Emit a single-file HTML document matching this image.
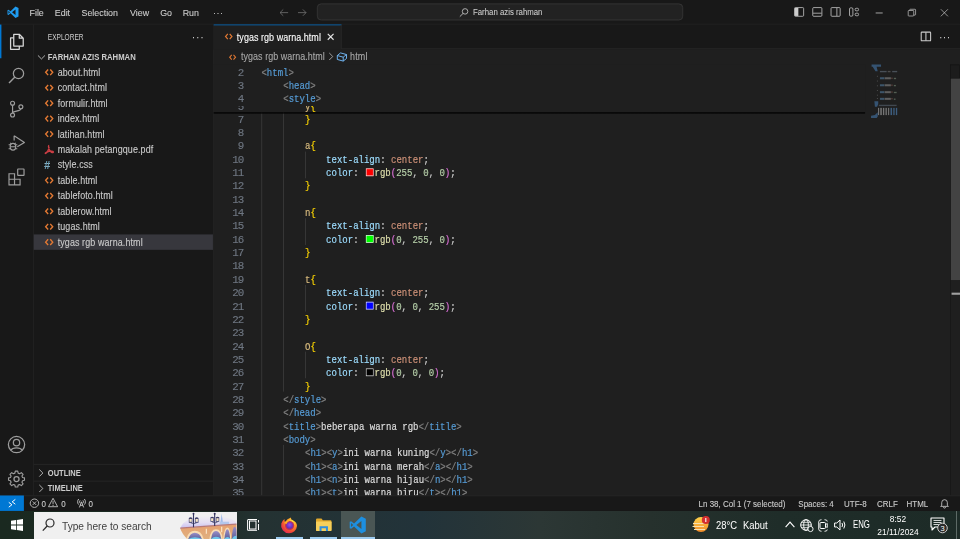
<!DOCTYPE html>
<html><head><meta charset="utf-8">
<style>
html,body{margin:0;padding:0;width:960px;height:539px;overflow:hidden;background:#181818;}
#s{position:absolute;left:0;top:0;width:1366px;height:768px;transform-origin:0 0;transform:scale(0.70278,0.70182);overflow:hidden;background:#181818;font-family:"Liberation Sans",sans-serif;color:#cccccc;}
.a{position:absolute;}
svg{position:absolute;overflow:visible;}
/* title */
#title{left:0;top:0;width:1366px;height:34px;background:#181818;border-bottom:1px solid #2b2b2b;}
.menu{position:absolute;top:0;height:35px;line-height:37px;font-size:13.8px;color:#cccccc;white-space:nowrap;transform:scaleX(0.913);transform-origin:0 0;-webkit-text-stroke:0.15px #cccccc;}
#cc{left:451px;top:5px;width:519px;height:22px;border:1px solid #3c3c3c;border-radius:6px;background:#222222;box-sizing:content-box;}
#cctext{position:absolute;left:221px;top:0;line-height:24px;font-size:13px;color:#cccccc;white-space:nowrap;transform:scaleX(0.855);transform-origin:0 0;-webkit-text-stroke:0.1px #cccccc;}
/* activity */
#act{left:0;top:35px;width:47px;height:671px;background:#181818;border-right:1px solid #2b2b2b;}
/* sidebar */
#side{left:48px;top:35px;width:255px;height:671px;background:#181818;border-right:1px solid #2b2b2b;}
.sh{position:absolute;font-size:11px;white-space:nowrap;}
.row{position:absolute;left:0;width:255px;height:22px;line-height:23px;font-size:14.3px;letter-spacing:0.17px;color:#cccccc;white-space:nowrap;-webkit-text-stroke:0.15px #cccccc;}
.row span{position:absolute;left:34px;transform:scaleX(0.89);transform-origin:0 0;}
.row i{position:absolute;left:14px;top:0;font-style:normal;}
/* editor */
#tabs{left:304px;top:35px;width:1062px;height:34px;background:#181818;border-bottom:1px solid #2b2b2b;}
#tab{left:304px;top:35px;width:182px;height:35px;background:#1f1f1f;border-top:1px solid #0078d4;box-sizing:border-box;border-right:1px solid #2b2b2b;}
#ed{left:304px;top:70px;width:1062px;height:636px;background:#1f1f1f;}
.ln{position:absolute;left:304px;width:42px;height:19px;line-height:24px;text-align:right;font-family:"Liberation Mono",monospace;font-size:15.4px;letter-spacing:-1.54px;color:#6e7681;-webkit-text-stroke:0.2px #6e7681;}
.cl{position:absolute;left:373px;height:19px;line-height:24px;font-family:"Liberation Mono",monospace;font-size:15.4px;white-space:pre;color:#cccccc;-webkit-text-stroke:0.28px currentColor;transform:scaleX(0.8333);transform-origin:0 0;}
.t{color:#808080}.n{color:#569cd6}.p{color:#9cdcfe}.v{color:#ce9178}.num{color:#b5cea8}.sel{color:#d7ba7d}.br{color:#ffd700}.br2{color:#da70d6}.fn{color:#dcdcaa}.tx{color:#dedede}
.ig{position:absolute;width:1px;background:#404040;}
.sw{display:inline-block;width:11px;height:9px;border:1px solid #eeeeee;vertical-align:0px;margin:0 2px 0 3px;}
/* status */
#status{left:0;top:706px;width:1366px;height:21px;border-top:1px solid #2b2b2b;background:#181818;}
.st{position:absolute;top:706px;height:22px;line-height:23px;font-size:13.2px;color:#cccccc;white-space:nowrap;transform:scaleX(0.86);transform-origin:0 0;-webkit-text-stroke:0.15px #cccccc;}
/* taskbar */
#task{left:0;top:728px;width:1366px;height:40px;background:#1b2a22;}
</style></head><body>
<div id="s">
<!-- TITLE BAR -->
<div id="title" class="a"></div>
<svg style="left:10px;top:9px" width="17" height="17" viewBox="0 0 100 100"><path d="M71 2 L96 14 V86 L71 98 L29 58 L12 72 L4 68 V32 L12 28 L29 42 Z M71 27 L42 50 L71 73 Z M12 38 V62 L24 50 Z" fill="#1f9cf0"/></svg>
<div class="menu" style="left:42px">File</div>
<div class="menu" style="left:78px">Edit</div>
<div class="menu" style="left:116px">Selection</div>
<div class="menu" style="left:185px">View</div>
<div class="menu" style="left:228px">Go</div>
<div class="menu" style="left:260px">Run</div>
<div class="menu" style="left:303px;letter-spacing:1px">···</div>
<svg style="left:396px;top:10px" width="16" height="16" viewBox="0 0 16 16"><path d="M14 8H2.5M7 3.5L2.5 8L7 12.5" stroke="#6e6e6e" stroke-width="1.2" fill="none"/></svg>
<svg style="left:422px;top:10px" width="16" height="16" viewBox="0 0 16 16"><path d="M2 8H13.5M9 3.5L13.5 8L9 12.5" stroke="#6e6e6e" stroke-width="1.2" fill="none"/></svg>
<div id="cc" class="a">
 <svg style="left:201px;top:4.5px" width="14" height="14" viewBox="0 0 16 16"><circle cx="10" cy="6" r="4.5" stroke="#cccccc" stroke-width="1.3" fill="none"/><path d="M6.8 9.2L1.5 14.5" stroke="#cccccc" stroke-width="1.4"/></svg>
 <div id="cctext">Farhan azis rahman</div>
</div>
<!-- layout icons -->
<svg style="left:1129px;top:9px" width="16" height="16" viewBox="0 0 16 16"><rect x="1.5" y="1.8" width="13" height="12.4" rx="1.3" stroke="#cccccc" fill="none" stroke-width="1.1"/><rect x="2" y="2.3" width="4.5" height="11.4" fill="#cccccc"/><path d="M6.5 2.3V13.7" stroke="#cccccc"/></svg>
<svg style="left:1155px;top:9px" width="16" height="16" viewBox="0 0 16 16"><rect x="1.5" y="1.8" width="13" height="12.4" rx="1.3" stroke="#cccccc" fill="none" stroke-width="1.1"/><path d="M2 9.8H14" stroke="#cccccc" stroke-width="1.1"/></svg>
<svg style="left:1181px;top:9px" width="16" height="16" viewBox="0 0 16 16"><rect x="1.5" y="1.8" width="13" height="12.4" rx="1.3" stroke="#cccccc" fill="none" stroke-width="1.1"/><path d="M9.8 2.3V13.7" stroke="#cccccc" stroke-width="1.1"/></svg>
<svg style="left:1207px;top:9px" width="16" height="16" viewBox="0 0 16 16"><rect x="1.8" y="2.2" width="4.8" height="11.8" rx="1.6" stroke="#cccccc" fill="none" stroke-width="1.1"/><rect x="9.8" y="2.8" width="4.8" height="3.6" rx="1.5" stroke="#cccccc" fill="none" stroke-width="1.1"/><rect x="9.8" y="9.8" width="4.8" height="3.6" rx="1.5" stroke="#cccccc" fill="none" stroke-width="1.1"/></svg>
<svg style="left:1244px;top:10px" width="16" height="16" viewBox="0 0 16 16"><path d="M2 8.5H12" stroke="#cccccc" stroke-width="1.1"/></svg>
<svg style="left:1291px;top:11px" width="14" height="14" viewBox="0 0 16 16"><rect x="1.5" y="4.5" width="9" height="9" rx="1" stroke="#cccccc" fill="none" stroke-width="1.1"/><path d="M4 4.5V3.5A1 1 0 0 1 5 2.5H12.5A1 1 0 0 1 13.5 3.5V11A1 1 0 0 1 12.5 12H10.5" stroke="#cccccc" fill="none" stroke-width="1.1"/></svg>
<svg style="left:1337px;top:11px" width="14" height="14" viewBox="0 0 16 16"><path d="M2 2.5L13.5 14M13.5 2.5L2 14" stroke="#cccccc" stroke-width="1.1"/></svg>

<!-- ACTIVITY BAR -->
<div id="act" class="a"></div>
<div class="a" style="left:0;top:35px;width:2px;height:48px;background:#0078d4"></div>
<div id="acticons">
<svg style="left:9.5px;top:45.5px" width="27" height="27" viewBox="0 0 24 24"><path d="M8.5 2.5H15.5L20.5 7.5V17.5H8.5Z M15.5 2.5V7.5H20.5" stroke="#d7d7d7" stroke-width="1.6" fill="none" stroke-linejoin="round"/><path d="M8.5 7H4.5V21.5H15.5V17.5" stroke="#d7d7d7" stroke-width="1.6" fill="none" stroke-linejoin="round"/></svg>
<svg style="left:9.5px;top:93.5px" width="27" height="27" viewBox="0 0 24 24"><circle cx="14.5" cy="9.5" r="6.5" stroke="#9d9d9d" stroke-width="1.6" fill="none"/><path d="M10 14L2.5 21.5" stroke="#9d9d9d" stroke-width="1.8"/></svg>
<svg style="left:9.5px;top:141.5px" width="27" height="27" viewBox="0 0 24 24"><circle cx="7" cy="4.5" r="2.5" stroke="#9d9d9d" stroke-width="1.5" fill="none"/><circle cx="7" cy="19.5" r="2.5" stroke="#9d9d9d" stroke-width="1.5" fill="none"/><circle cx="17.5" cy="9" r="2.5" stroke="#9d9d9d" stroke-width="1.5" fill="none"/><path d="M7 7V17M17.5 11.5C17.5 15 7 14 7 17" stroke="#9d9d9d" stroke-width="1.5" fill="none"/></svg>
<svg style="left:9.5px;top:189.5px" width="27" height="27" viewBox="0 0 24 24"><path d="M9 3V9M9 3L22 11.5L13 17" stroke="#9d9d9d" stroke-width="1.5" fill="none" stroke-linejoin="round"/><ellipse cx="7.5" cy="17" rx="3.5" ry="4.2" stroke="#9d9d9d" stroke-width="1.5" fill="none"/><path d="M2 14.5H4M11 14.5H13M2 19.5H4M11 19.5H13M4 12L5.5 13.5M11 12L9.5 13.5M4 17H11" stroke="#9d9d9d" stroke-width="1.3"/></svg>
<svg style="left:9.5px;top:237.5px" width="27" height="27" viewBox="0 0 24 24"><path d="M2.5 8.5H9.5V15.5H16.5V22.5H2.5Z M2.5 15.5H9.5V22.5" stroke="#9d9d9d" stroke-width="1.5" fill="none"/><rect x="13.5" y="2.5" width="8" height="8" rx="0.5" stroke="#9d9d9d" stroke-width="1.5" fill="none"/></svg>
<svg style="left:9.5px;top:619.5px" width="27" height="27" viewBox="0 0 24 24"><circle cx="12" cy="12" r="10.3" stroke="#9d9d9d" stroke-width="1.6" fill="none"/><circle cx="12" cy="9.5" r="4" stroke="#9d9d9d" stroke-width="1.6" fill="none"/><path d="M5 19C7 15 17 15 19 19" stroke="#9d9d9d" stroke-width="1.6" fill="none"/></svg>
<svg style="left:9.5px;top:667.5px" width="27" height="27" viewBox="0 0 24 24"><path d="M10.3 1.8H13.7L14.3 4.6L16.4 5.5L18.8 3.9L21.2 6.3L19.6 8.7L20.5 10.8L23.2 11.3V14.7L20.5 15.3L19.6 17.4L21.2 19.8L18.8 22.2L16.4 20.6L14.3 21.5L13.7 24.2H10.3L9.7 21.5L7.6 20.6L5.2 22.2L2.8 19.8L4.4 17.4L3.5 15.3L0.8 14.7V11.3L3.5 10.8L4.4 8.7L2.8 6.3L5.2 3.9L7.6 5.5L9.7 4.6Z" transform="translate(12 13) scale(0.9) translate(-12 -13)" stroke="#9d9d9d" stroke-width="1.6" fill="none" stroke-linejoin="round"/><circle cx="12" cy="13" r="3.2" stroke="#9d9d9d" stroke-width="1.6" fill="none"/></svg>
</div>

<!-- SIDEBAR -->
<div id="side" class="a">
 <div class="sh" style="left:20px;top:0;line-height:36px;font-size:12px;color:#cccccc;transform:scaleX(0.78);transform-origin:0 0">EXPLORER</div>
 <div class="sh" style="left:225px;top:0;line-height:35px;font-size:15px;letter-spacing:1px">···</div>
 <div class="sh" style="left:20px;top:35px;line-height:22px;font-size:11.8px;font-weight:bold;color:#cccccc;transform:scaleX(0.93);transform-origin:0 0">FARHAN AZIS RAHMAN</div>
 <svg style="left:3px;top:38px" width="16" height="16" viewBox="0 0 16 16"><path d="M3 6L8 11L13 6" stroke="#cccccc" stroke-width="1.2" fill="none"/></svg>
 <div id="files"><div class="row" style="top:57px;"><svg style="left:16px;top:5px" width="12" height="12" viewBox="0 0 12 12"><path d="M4.5 2L1 6L4.5 10M7.5 2L11 6L7.5 10" stroke="#e37933" stroke-width="2" fill="none"/></svg><span>about.html</span></div>
<div class="row" style="top:79px;"><svg style="left:16px;top:5px" width="12" height="12" viewBox="0 0 12 12"><path d="M4.5 2L1 6L4.5 10M7.5 2L11 6L7.5 10" stroke="#e37933" stroke-width="2" fill="none"/></svg><span>contact.html</span></div>
<div class="row" style="top:101px;"><svg style="left:16px;top:5px" width="12" height="12" viewBox="0 0 12 12"><path d="M4.5 2L1 6L4.5 10M7.5 2L11 6L7.5 10" stroke="#e37933" stroke-width="2" fill="none"/></svg><span>formulir.html</span></div>
<div class="row" style="top:123px;"><svg style="left:16px;top:5px" width="12" height="12" viewBox="0 0 12 12"><path d="M4.5 2L1 6L4.5 10M7.5 2L11 6L7.5 10" stroke="#e37933" stroke-width="2" fill="none"/></svg><span>index.html</span></div>
<div class="row" style="top:145px;"><svg style="left:16px;top:5px" width="12" height="12" viewBox="0 0 12 12"><path d="M4.5 2L1 6L4.5 10M7.5 2L11 6L7.5 10" stroke="#e37933" stroke-width="2" fill="none"/></svg><span>latihan.html</span></div>
<div class="row" style="top:167px;"><svg style="left:15px;top:4px" width="14" height="14" viewBox="0 0 14 14"><path d="M7 1C5 1 6 6 9 10C10.5 12 13 12 13 10.5C13 9 9 9 3 11C0.5 12 1 13.5 2.5 12.5C4.5 11 6.5 6 7 3" stroke="#cc3e44" stroke-width="1.8" fill="none"/></svg><span>makalah petangque.pdf</span></div>
<div class="row" style="top:189px;"><div class="a" style="left:15px;top:0;line-height:23px;font-size:15px;font-weight:bold;color:#519aba;transform:none">#</div><span>style.css</span></div>
<div class="row" style="top:211px;"><svg style="left:16px;top:5px" width="12" height="12" viewBox="0 0 12 12"><path d="M4.5 2L1 6L4.5 10M7.5 2L11 6L7.5 10" stroke="#e37933" stroke-width="2" fill="none"/></svg><span>table.html</span></div>
<div class="row" style="top:233px;"><svg style="left:16px;top:5px" width="12" height="12" viewBox="0 0 12 12"><path d="M4.5 2L1 6L4.5 10M7.5 2L11 6L7.5 10" stroke="#e37933" stroke-width="2" fill="none"/></svg><span>tablefoto.html</span></div>
<div class="row" style="top:255px;"><svg style="left:16px;top:5px" width="12" height="12" viewBox="0 0 12 12"><path d="M4.5 2L1 6L4.5 10M7.5 2L11 6L7.5 10" stroke="#e37933" stroke-width="2" fill="none"/></svg><span>tablerow.html</span></div>
<div class="row" style="top:277px;"><svg style="left:16px;top:5px" width="12" height="12" viewBox="0 0 12 12"><path d="M4.5 2L1 6L4.5 10M7.5 2L11 6L7.5 10" stroke="#e37933" stroke-width="2" fill="none"/></svg><span>tugas.html</span></div>
<div class="row" style="top:299px;background:#37373d;"><svg style="left:16px;top:5px" width="12" height="12" viewBox="0 0 12 12"><path d="M4.5 2L1 6L4.5 10M7.5 2L11 6L7.5 10" stroke="#e37933" stroke-width="2" fill="none"/></svg><span>tygas rgb warna.html</span></div></div><!--/files-->
 <div class="a" style="left:0;top:626px;width:255px;height:1px;background:#2b2b2b"></div>
 <div class="a" style="left:0;top:650px;width:255px;height:1px;background:#2b2b2b"></div>
 <svg style="left:2px;top:631px" width="16" height="16" viewBox="0 0 16 16"><path d="M6 3L11 8L6 13" stroke="#cccccc" stroke-width="1.2" fill="none"/></svg>
 <svg style="left:2px;top:653px" width="16" height="16" viewBox="0 0 16 16"><path d="M6 3L11 8L6 13" stroke="#cccccc" stroke-width="1.2" fill="none"/></svg>
 <div class="sh" style="left:20px;top:628px;line-height:22px;font-size:12px;font-weight:bold;transform:scaleX(0.89);transform-origin:0 0">OUTLINE</div>
 <div class="sh" style="left:20px;top:650px;line-height:22px;font-size:12px;font-weight:bold;transform:scaleX(0.89);transform-origin:0 0">TIMELINE</div>
</div>

<!-- EDITOR -->
<div id="tabs" class="a"></div>
<div id="tab" class="a"></div>
<div id="ed" class="a"></div>
<div id="code"><div class="a" style="left:304px;top:92px;width:1062px;height:614px;overflow:hidden">
<div class="ig" style="left:68.00px;top:29.00px;height:608px"></div>
<div class="ig" style="left:98.80px;top:29.00px;height:437px"></div>
<div class="ig" style="left:98.80px;top:542.00px;height:95px"></div>
<div class="ig" style="left:129.60px;top:124.00px;height:38px"></div>
<div class="ig" style="left:129.60px;top:219.00px;height:38px"></div>
<div class="ig" style="left:129.60px;top:314.00px;height:38px"></div>
<div class="ig" style="left:129.60px;top:409.00px;height:38px"></div>
<div class="ln" style="left:0;top:67.00px">7</div>
<div class="cl" style="left:129.60px;top:67.00px"><span class="br">}</span></div>
<div class="ln" style="left:0;top:86.00px">8</div>
<div class="ln" style="left:0;top:105.00px">9</div>
<div class="cl" style="left:129.60px;top:105.00px"><span class="sel">a</span><span class="br">{</span></div>
<div class="ln" style="left:0;top:124.00px">10</div>
<div class="cl" style="left:160.40px;top:124.00px"><span class="p">text-align</span>: <span class="v">center</span>;</div>
<div class="ln" style="left:0;top:143.00px">11</div>
<div class="cl" style="left:160.40px;top:143.00px"><span class="p">color</span>: <span class="sw" style="background:#ff0000"></span><span class="fn">rgb</span><span class="br2">(</span><span class="num">255</span>, <span class="num">0</span>, <span class="num">0</span><span class="br2">)</span>;</div>
<div class="ln" style="left:0;top:162.00px">12</div>
<div class="cl" style="left:129.60px;top:162.00px"><span class="br">}</span></div>
<div class="ln" style="left:0;top:181.00px">13</div>
<div class="ln" style="left:0;top:200.00px">14</div>
<div class="cl" style="left:129.60px;top:200.00px"><span class="sel">n</span><span class="br">{</span></div>
<div class="ln" style="left:0;top:219.00px">15</div>
<div class="cl" style="left:160.40px;top:219.00px"><span class="p">text-align</span>: <span class="v">center</span>;</div>
<div class="ln" style="left:0;top:238.00px">16</div>
<div class="cl" style="left:160.40px;top:238.00px"><span class="p">color</span>: <span class="sw" style="background:#00ff00"></span><span class="fn">rgb</span><span class="br2">(</span><span class="num">0</span>, <span class="num">255</span>, <span class="num">0</span><span class="br2">)</span>;</div>
<div class="ln" style="left:0;top:257.00px">17</div>
<div class="cl" style="left:129.60px;top:257.00px"><span class="br">}</span></div>
<div class="ln" style="left:0;top:276.00px">18</div>
<div class="ln" style="left:0;top:295.00px">19</div>
<div class="cl" style="left:129.60px;top:295.00px"><span class="sel">t</span><span class="br">{</span></div>
<div class="ln" style="left:0;top:314.00px">20</div>
<div class="cl" style="left:160.40px;top:314.00px"><span class="p">text-align</span>: <span class="v">center</span>;</div>
<div class="ln" style="left:0;top:333.00px">21</div>
<div class="cl" style="left:160.40px;top:333.00px"><span class="p">color</span>: <span class="sw" style="background:#0000ff"></span><span class="fn">rgb</span><span class="br2">(</span><span class="num">0</span>, <span class="num">0</span>, <span class="num">255</span><span class="br2">)</span>;</div>
<div class="ln" style="left:0;top:352.00px">22</div>
<div class="cl" style="left:129.60px;top:352.00px"><span class="br">}</span></div>
<div class="ln" style="left:0;top:371.00px">23</div>
<div class="ln" style="left:0;top:390.00px">24</div>
<div class="cl" style="left:129.60px;top:390.00px"><span class="sel">O</span><span class="br">{</span></div>
<div class="ln" style="left:0;top:409.00px">25</div>
<div class="cl" style="left:160.40px;top:409.00px"><span class="p">text-align</span>: <span class="v">center</span>;</div>
<div class="ln" style="left:0;top:428.00px">26</div>
<div class="cl" style="left:160.40px;top:428.00px"><span class="p">color</span>: <span class="sw" style="background:#000000"></span><span class="fn">rgb</span><span class="br2">(</span><span class="num">0</span>, <span class="num">0</span>, <span class="num">0</span><span class="br2">)</span>;</div>
<div class="ln" style="left:0;top:447.00px">27</div>
<div class="cl" style="left:129.60px;top:447.00px"><span class="br">}</span></div>
<div class="ln" style="left:0;top:466.00px">28</div>
<div class="cl" style="left:98.80px;top:466.00px"><span class="t">&lt;/</span><span class="n">style</span><span class="t">&gt;</span></div>
<div class="ln" style="left:0;top:485.00px">29</div>
<div class="cl" style="left:98.80px;top:485.00px"><span class="t">&lt;/</span><span class="n">head</span><span class="t">&gt;</span></div>
<div class="ln" style="left:0;top:504.00px">30</div>
<div class="cl" style="left:98.80px;top:504.00px"><span class="t">&lt;</span><span class="n">title</span><span class="t">&gt;</span><span class="tx">beberapa warna rgb</span><span class="t">&lt;/</span><span class="n">title</span><span class="t">&gt;</span></div>
<div class="ln" style="left:0;top:523.00px">31</div>
<div class="cl" style="left:98.80px;top:523.00px"><span class="t">&lt;</span><span class="n">body</span><span class="t">&gt;</span></div>
<div class="ln" style="left:0;top:542.00px">32</div>
<div class="cl" style="left:129.60px;top:542.00px"><span class="t">&lt;</span><span class="n">h1</span><span class="t">&gt;</span><span class="t">&lt;</span><span class="n">y</span><span class="t">&gt;</span><span class="tx">ini warna kuning</span><span class="t">&lt;/</span><span class="n">y</span><span class="t">&gt;</span><span class="t">&lt;/</span><span class="n">h1</span><span class="t">&gt;</span></div>
<div class="ln" style="left:0;top:561.00px">33</div>
<div class="cl" style="left:129.60px;top:561.00px"><span class="t">&lt;</span><span class="n">h1</span><span class="t">&gt;</span><span class="t">&lt;</span><span class="n">a</span><span class="t">&gt;</span><span class="tx">ini warna merah</span><span class="t">&lt;/</span><span class="n">a</span><span class="t">&gt;</span><span class="t">&lt;/</span><span class="n">h1</span><span class="t">&gt;</span></div>
<div class="ln" style="left:0;top:580.00px">34</div>
<div class="cl" style="left:129.60px;top:580.00px"><span class="t">&lt;</span><span class="n">h1</span><span class="t">&gt;</span><span class="t">&lt;</span><span class="n">n</span><span class="t">&gt;</span><span class="tx">ini warna hijau</span><span class="t">&lt;/</span><span class="n">n</span><span class="t">&gt;</span><span class="t">&lt;/</span><span class="n">h1</span><span class="t">&gt;</span></div>
<div class="ln" style="left:0;top:599.00px">35</div>
<div class="cl" style="left:129.60px;top:599.00px"><span class="t">&lt;</span><span class="n">h1</span><span class="t">&gt;</span><span class="t">&lt;</span><span class="n">t</span><span class="t">&gt;</span><span class="tx">ini warna biru</span><span class="t">&lt;/</span><span class="n">t</span><span class="t">&gt;</span><span class="t">&lt;/</span><span class="n">h1</span><span class="t">&gt;</span></div>
</div>
<div class="a" style="left:304px;top:92px;width:927px;height:68px;background:#1f1f1f;overflow:hidden">
<div class="ln" style="left:0;top:0.00px">2</div>
<div class="cl" style="left:68.00px;top:0.00px"><span class="t">&lt;</span><span class="n">html</span><span class="t">&gt;</span></div>
<div class="ln" style="left:0;top:19.00px">3</div>
<div class="cl" style="left:98.80px;top:19.00px"><span class="t">&lt;</span><span class="n">head</span><span class="t">&gt;</span></div>
<div class="ln" style="left:0;top:38.00px">4</div>
<div class="cl" style="left:98.80px;top:38.00px"><span class="t">&lt;</span><span class="n">style</span><span class="t">&gt;</span></div>
<div class="a" style="left:0;top:59px;width:927px;height:9px;overflow:hidden">
<div class="ln" style="left:0;top:-10px">5</div>
<div class="cl" style="left:129.60px;top:-10px"><span class="sel">y</span><span class="br">{</span></div>
</div>
</div>
<div class="a" style="left:304px;top:159.6px;width:927px;height:3px;background:linear-gradient(#000 0,#000 1px,rgba(0,0,0,0.4) 2px,transparent 3px)"></div></div><!--/code-->
<div id="edextra">
<svg style="left:320px;top:46px" width="11" height="12" viewBox="0 0 12 12"><path d="M4.5 2L1 6L4.5 10M7.5 2L11 6L7.5 10" stroke="#e37933" stroke-width="1.8" fill="none"/></svg>
<div class="a" style="left:337px;top:35px;line-height:37px;font-size:14.7px;letter-spacing:0.06px;color:#ffffff;white-space:nowrap;transform:scaleX(0.87);transform-origin:0 0;-webkit-text-stroke:0.15px #ffffff">tygas rgb warna.html</div>
<svg style="left:465px;top:47px" width="11" height="11" viewBox="0 0 12 12"><path d="M1.5 1.5L10.5 10.5M10.5 1.5L1.5 10.5" stroke="#e8e8e8" stroke-width="1.7"/></svg>
<svg style="left:1310px;top:45px" width="15" height="14" viewBox="0 0 15 14"><rect x="0.8" y="0.8" width="13.4" height="12.4" rx="1" stroke="#cccccc" stroke-width="1.5" fill="none"/><path d="M7.5 1V13" stroke="#cccccc" stroke-width="1.5"/></svg>
<div class="a" style="left:1336px;top:35px;line-height:35px;font-size:15px;letter-spacing:0.5px;color:#cccccc">···</div>
<svg style="left:325.5px;top:76px" width="10" height="11" viewBox="0 0 12 12"><path d="M4.5 2L1 6L4.5 10M7.5 2L11 6L7.5 10" stroke="#e37933" stroke-width="1.8" fill="none"/></svg>
<div class="a" style="left:343px;top:70px;line-height:22px;font-size:14.3px;letter-spacing:0.06px;color:#a9a9a9;white-space:nowrap;transform:scaleX(0.89);transform-origin:0 0;-webkit-text-stroke:0.15px #a9a9a9">tygas rgb warna.html</div>
<svg style="left:466px;top:74px" width="10" height="13" viewBox="0 0 10 13"><path d="M2.5 1.5L7.5 6.5L2.5 11.5" stroke="#a9a9a9" stroke-width="1.3" fill="none"/></svg>
<svg style="left:479px;top:74px" width="15" height="14" viewBox="0 0 16 15"><path d="M1 5.5L6 1.5L15 4V10L10 14L1 11.5Z M1 5.5L10 8L15 4 M10 8V14" stroke="#75beff" stroke-width="1.4" fill="none" stroke-linejoin="round"/></svg>
<div class="a" style="left:498px;top:70px;line-height:22px;font-size:14.3px;letter-spacing:0.3px;color:#a9a9a9;transform:scaleX(0.89);transform-origin:0 0;-webkit-text-stroke:0.15px #a9a9a9">html</div>
<div class="a" style="left:1352px;top:92px;width:14px;height:614px;background:#1f1f1f;border-left:1px solid #161616"></div>
<div class="a" style="left:1352px;top:92px;width:14px;height:20px;background:#1c1c1c;border:1px solid #141414;box-sizing:border-box"></div>
<div class="a" style="left:1353px;top:112px;width:13px;height:287px;background:#434343"></div>
<div class="a" style="left:1354px;top:417px;width:12px;height:3px;background:#a0a0a0"></div>
</div><!--/edextra-->

<!-- STATUS -->
<div id="status" class="a"></div>
<div class="a" style="left:0;top:706px;width:34px;height:22px;background:#0078d4"></div>
<div id="statusitems">
<svg style="left:9px;top:709px" width="16" height="16" viewBox="0 0 16 16"><path d="M3.5 6.8L8 10.2L3.5 13.6M12.8 2.6L8.3 6L12.8 9.4" stroke="#ffffff" stroke-width="1.4" fill="none"/></svg>
<svg style="left:42px;top:710px" width="14" height="14" viewBox="0 0 14 14"><circle cx="7" cy="7" r="6" stroke="#cccccc" stroke-width="1.2" fill="none"/><path d="M4.5 4.5L9.5 9.5M9.5 4.5L4.5 9.5" stroke="#cccccc" stroke-width="1.2"/></svg>
<div class="st" style="left:59px">0</div>
<svg style="left:67.5px;top:709px" width="15" height="14" viewBox="0 0 15 14"><path d="M7.5 1L14 13H1Z M7.5 5V9.5M7.5 10.5V12" stroke="#cccccc" stroke-width="1.2" fill="none" stroke-linejoin="round"/></svg>
<div class="st" style="left:86.5px">0</div>
<svg style="left:108px;top:709px" width="16" height="15" viewBox="0 0 16 15"><path d="M4 2C2 4 2 8 4 10M12 2C14 4 14 8 12 10M6 4C5 5 5 7 6 8M10 4C11 5 11 7 10 8M8 6L5 14M8 6L11 14M6 11H10" stroke="#cccccc" stroke-width="1.3" fill="none"/></svg>
<div class="st" style="left:126px">0</div>
<div class="st" style="left:994px">Ln 38, Col 1 (7 selected)</div>
<div class="st" style="left:1136px">Spaces: 4</div>
<div class="st" style="left:1201px">UTF-8</div>
<div class="st" style="left:1248px">CRLF</div>
<div class="st" style="left:1290px">HTML</div>
<svg style="left:1337px;top:710px" width="14" height="14" viewBox="0 0 14 14"><path d="M3 10V6A4 4 0 0 1 11 6V10L12.5 11.5H1.5Z M5.5 12.5A1.5 1.5 0 0 0 8.5 12.5" stroke="#cccccc" stroke-width="1.2" fill="none"/></svg>
</div>

<!-- TASKBAR -->
</div>
<svg id="mm" style="position:absolute;left:866px;top:60px;filter:blur(0.45px);opacity:0.7" width="40" height="60" viewBox="0 0 359 539">
 <path d="M50 40H135V60H95L105 100H85L60 60H50Z" fill="#3f6a96"/>
 <g fill="#707070"><rect x="98" y="142" width="8" height="8"/><rect x="98" y="185" width="8" height="8"/><rect x="98" y="228" width="8" height="8"/><rect x="98" y="270" width="8" height="8"/><rect x="98" y="312" width="8" height="8"/><rect x="98" y="342" width="8" height="8"/></g>
 <g><rect x="125" y="98" width="60" height="12" fill="#5a6470"/><rect x="195" y="98" width="25" height="12" fill="#606060"/><rect x="235" y="98" width="45" height="12" fill="#5a6470"/></g>
 <g><rect x="125" y="155" width="40" height="18" fill="#4a6d8a"/><rect x="168" y="155" width="55" height="18" fill="#7a7a7a"/><rect x="228" y="158" width="10" height="12" fill="#8a5a50"/><rect x="250" y="160" width="20" height="12" fill="#6a7a6a"/></g>
 <g><rect x="125" y="218" width="40" height="18" fill="#4a6d8a"/><rect x="168" y="218" width="55" height="18" fill="#7a7a7a"/><rect x="228" y="220" width="10" height="12" fill="#8a5a50"/><rect x="250" y="224" width="18" height="12" fill="#6a7a6a"/></g>
 <g><rect x="125" y="280" width="40" height="18" fill="#4a6d8a"/><rect x="168" y="280" width="55" height="18" fill="#7a7a7a"/><rect x="228" y="282" width="10" height="12" fill="#8a5a50"/><rect x="250" y="286" width="25" height="12" fill="#6a7a6a"/></g>
 <g><rect x="125" y="340" width="40" height="18" fill="#4a6d8a"/><rect x="168" y="340" width="55" height="18" fill="#7a7a7a"/><rect x="228" y="342" width="10" height="12" fill="#8a5a50"/><rect x="250" y="346" width="15" height="12" fill="#6a7a6a"/></g>
 <path d="M75 370H110V395L100 420H80Z" fill="#3f6a96"/>
 <rect x="115" y="402" width="160" height="12" fill="#505a66"/>
 <g fill="#9a9a9a"><rect x="108" y="430" width="10" height="65"/><rect x="128" y="430" width="14" height="65"/><rect x="152" y="430" width="12" height="65"/><rect x="175" y="430" width="12" height="65"/><rect x="198" y="430" width="10" height="65"/></g>
 <g fill="#4a78a8"><rect x="220" y="430" width="14" height="65"/><rect x="245" y="430" width="12" height="65"/><rect x="268" y="430" width="12" height="65"/></g>
 <path d="M45 500L80 495L105 470V510L95 520H45Z" fill="#3f6a96"/>
</svg>
<div id="tb" style="position:absolute;left:0;top:511px;width:960px;height:28px;background:linear-gradient(90deg,#1a2920 0,#1b2a22 200px,#243232 260px,#22333a 420px,#2c3735 540px,#26312d 650px,#1f2d29 780px,#1d2b27 960px);font-family:'Liberation Sans',sans-serif;">
<svg style="position:absolute;left:11px;top:8px" width="12" height="12" viewBox="0 0 12 12"><path d="M0 1.7L5 1V5.6H0Z M5.8 0.9L12 0V5.6H5.8Z M0 6.4H5V11L0 10.3Z M5.8 6.4H12V12L5.8 11.1Z" fill="#ffffff"/></svg>
<div style="position:absolute;left:34px;top:1px;width:202.5px;height:27px;background:#f0f0f0"></div>
<svg style="position:absolute;left:42px;top:7px" width="13" height="14" viewBox="0 0 13 14"><circle cx="8" cy="5" r="4" stroke="#2a2a2a" stroke-width="1.2" fill="none"/><path d="M5.2 8L0.8 12.6" stroke="#2a2a2a" stroke-width="1.3"/></svg>
<div style="position:absolute;left:62px;top:1px;line-height:27px;font-size:11.6px;color:#404040;white-space:nowrap;transform:scaleX(0.875);transform-origin:0 0">Type here to search</div>
<svg style="position:absolute;left:170px;top:1px" width="66.5" height="27" viewBox="0 27 911 370" preserveAspectRatio="none">
 <defs>
  <linearGradient id="sky" x1="0" y1="0" x2="0" y2="1"><stop offset="0" stop-color="#f0f0f0"/><stop offset="0.55" stop-color="#e4def4"/><stop offset="1" stop-color="#c8bfee"/></linearGradient>
  <linearGradient id="arch" x1="0" y1="0" x2="0" y2="1"><stop offset="0" stop-color="#9a8fc8"/><stop offset="1" stop-color="#5e5f98"/></linearGradient>
  <linearGradient id="deck" x1="0" y1="0" x2="0" y2="1"><stop offset="0" stop-color="#e6a06e"/><stop offset="1" stop-color="#e0b080"/></linearGradient>
 </defs>
 <path d="M140 250Q200 90 520 80Q850 90 911 170V200L140 250Z" fill="url(#sky)"/>
 <path d="M688 195L708 48L728 195Z" fill="#9fbbe8"/>
 <path d="M680 160H810V200H680Z" fill="#b3c7ec"/>
 <path d="M140 248Q500 222 911 195V397H240Q165 330 140 248Z" fill="url(#deck)"/>
 <path d="M140 238Q500 212 911 185V202Q500 230 143 258Z" fill="#b87a78"/>
 <path d="M222 397Q255 285 340 285Q432 285 462 397Z" fill="#f8dcb4"/>
 <path d="M250 397Q278 312 340 312Q408 312 436 397Z" fill="url(#arch)"/>
 <path d="M540 397Q555 262 630 262Q708 262 722 397Z" fill="#f8dcb4"/>
 <path d="M562 397Q576 288 630 288Q688 288 702 397Z" fill="url(#arch)"/>
 <path d="M728 397Q742 238 786 238Q828 238 838 397Z" fill="#f8dcb4"/>
 <path d="M745 397Q756 262 786 262Q816 262 823 397Z" fill="url(#arch)"/>
 <path d="M845 397Q856 228 885 228Q911 235 911 300V397Z" fill="url(#arch)"/>
 <path d="M250 397Q340 350 440 397Z M560 397Q630 338 705 397Z M740 397Q790 345 830 397Z M845 397Q880 345 911 355V397Z" fill="#70c8ec"/>
 <path d="M498 255V325M708 228V305" stroke="#fbe6c8" stroke-width="16"/>
 <path d="M322 45V235M612 45V218" stroke="#34355f" stroke-width="15"/>
 <path d="M282 175Q322 200 365 175M578 165Q612 190 652 165" stroke="#34355f" stroke-width="9" fill="none"/>
 <path d="M258 110Q282 90 306 110V175H258Z" fill="#3a3b68"/><rect x="266" y="122" width="32" height="40" fill="#f6e7c6"/>
 <path d="M342 110Q366 90 390 110V175H342Z" fill="#3a3b68"/><rect x="350" y="122" width="32" height="40" fill="#f6e7c6"/>
 <path d="M555 100Q578 82 601 100V162H555Z" fill="#3a3b68"/><rect x="563" y="112" width="30" height="38" fill="#f6e7c6"/>
 <path d="M628 100Q651 82 674 100V162H628Z" fill="#3a3b68"/><rect x="636" y="112" width="30" height="38" fill="#f6e7c6"/>
 <circle cx="322" cy="50" r="13" fill="#34355f"/><circle cx="612" cy="50" r="13" fill="#34355f"/>
</svg>
<svg style="position:absolute;left:246.5px;top:8px" width="14" height="12" viewBox="0 0 14 12"><rect x="2.5" y="2" width="6.5" height="8" stroke="#ffffff" stroke-width="1" fill="none"/><path d="M0.6 0.5V11.5M11.5 1V3.5M11.5 5V11M1 0.5H10M1 11.3H10" stroke="#ffffff" stroke-width="1"/></svg>
<svg style="position:absolute;left:280px;top:5px" width="18" height="18" viewBox="0 0 18 18"><defs><radialGradient id="ff" cx="0.7" cy="0.25" r="0.9"><stop offset="0" stop-color="#ffe640"/><stop offset="0.35" stop-color="#ff9a26"/><stop offset="0.75" stop-color="#f0413a"/><stop offset="1" stop-color="#d9246a"/></radialGradient><radialGradient id="ffc" cx="0.5" cy="0.4" r="0.6"><stop offset="0" stop-color="#9c4de8"/><stop offset="1" stop-color="#5b2ab8"/></radialGradient></defs><path d="M9 17.3A8 8 0 0 1 1.3 7.5Q2.5 4 4.5 3Q4.3 5 5 6Q7 2.5 11 1.5Q10.5 3.5 12.5 4Q17 6 17 10A8 8 0 0 1 9 17.3Z" fill="url(#ff)"/><circle cx="9.6" cy="9.6" r="4.6" fill="#c0305a"/><circle cx="9.6" cy="9.4" r="3.2" fill="url(#ffc)"/><path d="M4 7Q6 4 10 4.5Q7 5.5 6.5 8Z" fill="#ffb020"/></svg>
<svg style="position:absolute;left:316px;top:7px" width="15.5" height="14" viewBox="0 0 17 14"><path d="M0 1.2Q0 0 1.2 0H6L7.5 1.8H15.8Q17 1.8 17 3V13H0Z" fill="#e2a92c"/><rect x="0" y="3.2" width="17" height="10.3" rx="0.8" fill="#f7cf5b"/><path d="M5 13.5V9.5H12V13.5" stroke="#2f8fe0" stroke-width="2.2" fill="none"/></svg>
<div style="position:absolute;left:341px;top:0;width:33.5px;height:28px;background:#4a5654"></div>
<svg style="position:absolute;left:349px;top:5px" width="17.5" height="18" viewBox="0 0 100 100"><path d="M71 2 L96 14 V86 L71 98 L29 58 L12 72 L4 68 V32 L12 28 L29 42 Z M71 27 L42 50 L71 73 Z M12 38 V62 L24 50 Z" fill="#1d8fe0"/></svg>
<div style="position:absolute;left:275.5px;top:26px;width:27.5px;height:2px;background:#9ccbf0"></div>
<div style="position:absolute;left:309.5px;top:26px;width:27.5px;height:2px;background:#9ccbf0"></div>
<div style="position:absolute;left:341px;top:26px;width:33.5px;height:2px;background:#9ccbf0"></div>
<svg style="position:absolute;left:692px;top:4px" width="19" height="17" viewBox="0 0 19 17"><defs><linearGradient id="sun" x1="0" y1="0" x2="0" y2="1"><stop offset="0" stop-color="#ffd34a"/><stop offset="1" stop-color="#f08a2a"/></linearGradient></defs><circle cx="9" cy="9.5" r="7.5" fill="url(#sun)"/><path d="M1 8.5H13M0.5 11.5H12M2 14.5H13" stroke="#f6e0b0" stroke-width="1.1"/><circle cx="13.8" cy="5" r="4" fill="#d42f2f"/><path d="M13.8 3V7" stroke="#ffffff" stroke-width="1.1"/></svg>
<div style="position:absolute;left:715.5px;top:0;line-height:28.5px;font-size:11.8px;color:#ffffff;white-space:nowrap;transform:scaleX(0.8);transform-origin:0 0">28°C</div>
<div style="position:absolute;left:743px;top:0;line-height:28.5px;font-size:11.8px;color:#ffffff;white-space:nowrap;transform:scaleX(0.8);transform-origin:0 0">Kabut</div>
<svg style="position:absolute;left:784.5px;top:10px" width="10" height="7" viewBox="0 0 10 7"><path d="M0.6 6.2L5 1.2L9.4 6.2" stroke="#ffffff" stroke-width="1.1" fill="none"/></svg>
<svg style="position:absolute;left:799.5px;top:8px" width="14" height="13" viewBox="0 0 14 13"><circle cx="6" cy="6" r="5.3" stroke="#ffffff" stroke-width="1" fill="none"/><ellipse cx="6" cy="6" rx="2.3" ry="5.3" stroke="#ffffff" stroke-width="0.9" fill="none"/><path d="M0.7 6H11.3M1.5 3.3H10.5M1.5 8.7H10.5" stroke="#ffffff" stroke-width="0.8"/><circle cx="10.5" cy="10" r="2.6" fill="#1c2b27" stroke="#ffffff" stroke-width="0.9"/></svg>
<svg style="position:absolute;left:818px;top:8px" width="10" height="13" viewBox="0 0 10 13"><rect x="2" y="3.5" width="5.5" height="6" rx="1" stroke="#ffffff" stroke-width="1" fill="none"/><path d="M7.5 5.5L9.3 4.5V8.5L7.5 7.5M3.5 0.7Q0.7 0.7 0.7 3V10Q0.7 12.3 3.5 12.3M6.5 0.7Q9.3 0.7 9.3 2.5M6.5 12.3Q9.3 12.3 9.3 10.5" stroke="#ffffff" stroke-width="0.9" fill="none"/></svg>
<svg style="position:absolute;left:833.5px;top:8px" width="13" height="12" viewBox="0 0 13 12"><path d="M0.6 4H2.8L6 1V11L2.8 8H0.6Z" stroke="#ffffff" stroke-width="1" fill="none" stroke-linejoin="round"/><path d="M8 4Q9.2 6 8 8M9.8 2.5Q12 6 9.8 9.5" stroke="#ffffff" stroke-width="1" fill="none"/></svg>
<div style="position:absolute;left:852.5px;top:0;line-height:28.5px;font-size:10px;color:#ffffff;transform:scaleX(0.78);transform-origin:0 0">ENG</div>
<div style="position:absolute;left:870px;top:2px;width:56px;text-align:center;line-height:12px;font-size:9.3px;color:#ffffff;transform:scaleX(0.9);transform-origin:28px 0">8:52</div>
<div style="position:absolute;left:870px;top:14.5px;width:56px;text-align:center;line-height:12px;font-size:9.3px;color:#ffffff;transform:scaleX(0.9);transform-origin:28px 0">21/11/2024</div>
<svg style="position:absolute;left:930px;top:6px" width="19" height="17" viewBox="0 0 19 17"><path d="M1 1H14V10H5L2 13V10H1Z" stroke="#ffffff" stroke-width="1.1" fill="none" stroke-linejoin="round"/><path d="M3.5 3.5H11.5M3.5 5.5H11.5M3.5 7.5H9" stroke="#ffffff" stroke-width="0.8"/><circle cx="12.5" cy="11" r="4.8" fill="#2a2a2a" stroke="#dddddd" stroke-width="0.9"/><text x="12.5" y="13.8" font-size="7.5" text-anchor="middle" fill="#ffffff" font-family="Liberation Sans">3</text></svg>
<div style="position:absolute;left:956px;top:0;width:1px;height:28px;background:#5d6a66"></div>
</div>
</body></html>
